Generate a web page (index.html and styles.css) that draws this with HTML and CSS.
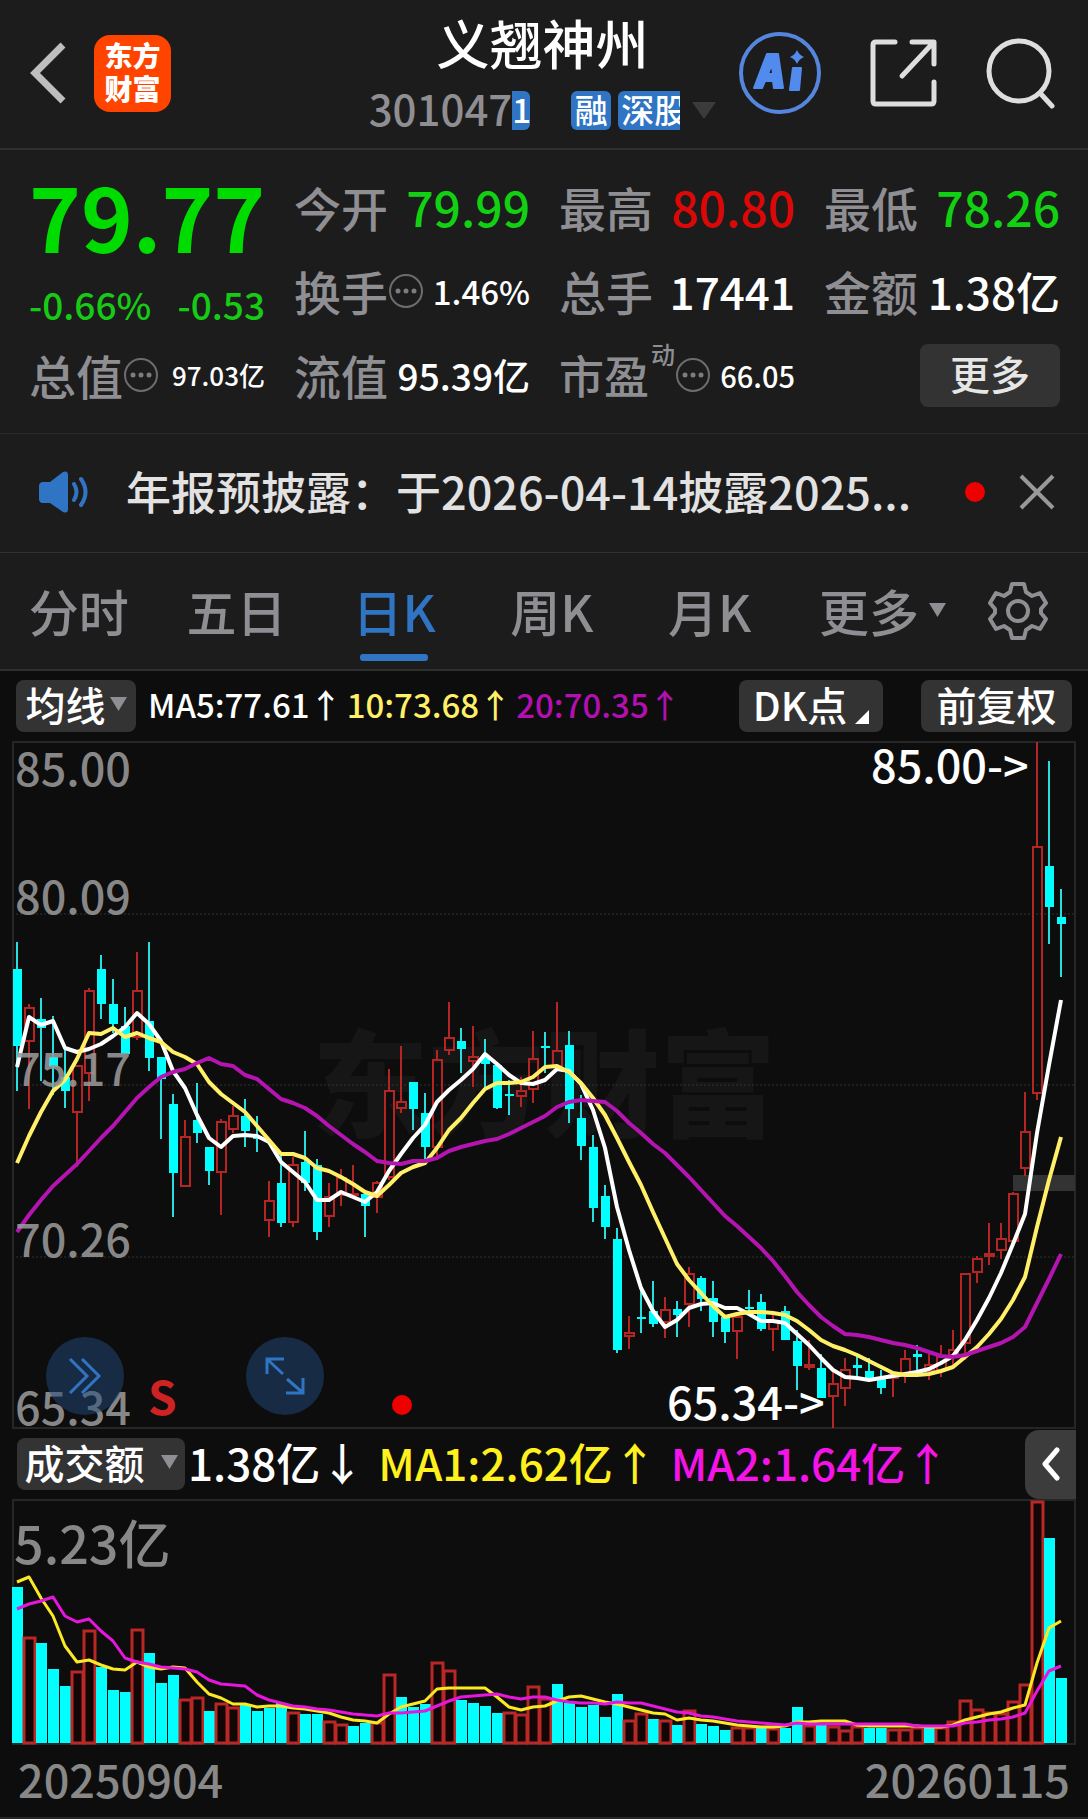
FILE: index.html
```html
<!DOCTYPE html>
<html lang="zh-CN">
<head>
<meta charset="utf-8">
<meta name="viewport" content="width=device-width, initial-scale=1">
<title>义翘神州 301047</title>
<link rel="stylesheet" href="styles.css">
</head>
<body>
<header class="topbar">
  <div class="topbar-left">
    <button class="icon-btn" aria-label="返回">
      <svg width="38" height="64" viewBox="0 0 38 64"><path d="M34 4 6 32l28 28" fill="none" stroke="#bebebe" stroke-width="7"/></svg>
    </button>
    <a class="logo" href="#">东方<br>财富</a>
  </div>
  <div class="title">
    <h1 class="name">义翘神州</h1>
    <div class="code-row">
      <span class="code">301047</span><span class="tag tag-cut">1</span>
      <span class="tag tag-margin">融</span>
      <span class="tag tag-market">深股</span>
      <svg class="code-caret" width="24" height="17" viewBox="0 0 24 17"><path d="M0 0h24L12 17z" fill="#3b3b3b"/></svg>
    </div>
  </div>
  <div class="topbar-right">
    <button class="icon-btn" aria-label="AI">
      <svg width="84" height="84" viewBox="0 0 84 84"><circle cx="42" cy="42" r="39" fill="none" stroke="#5585dc" stroke-width="4"/><path fill-rule="evenodd" fill="#528bee" stroke="#528bee" stroke-width="2" stroke-linejoin="round" d="M29 23h11l5 34h-9l-1-7h-8l-3 7h-8zM34 33l-4 10h5z"/><path fill="#528bee" stroke="#528bee" stroke-width="2" stroke-linejoin="round" d="m55 37h8l-2 22h-9z"/><path fill="#528bee" d="M59 19q2 5 7 7-5 2-7 7-2-5-7-7 5-2 7-7z"/></svg>
    </button>
    <button class="icon-btn" aria-label="分享">
      <svg width="68" height="70" viewBox="0 0 68 70"><g fill="none" stroke="#dedede" stroke-width="5" stroke-linecap="round" stroke-linejoin="round"><path d="M25 4H6q-3 0-3 3v56q0 3 3 3h55q3 0 3-3V44M42 4h22v22M63 5 32 38"/></g></svg>
    </button>
    <button class="icon-btn" aria-label="搜索">
      <svg width="70" height="72" viewBox="0 0 70 72"><g fill="none" stroke="#dedede" stroke-width="5" stroke-linecap="round"><circle cx="33" cy="34" r="30"/><path d="m54 56 12 13"/></g></svg>
    </button>
  </div>
</header>

<section class="quote">
  <div class="price-box">
    <div class="price">79.77</div>
    <div class="change"><span>-0.66%</span><span>-0.53</span></div>
  </div>
  <div class="stat"><span class="label">今开</span><span class="v48 down">79.99</span></div>
  <div class="stat"><span class="label">最高</span><span class="v48 up">80.80</span></div>
  <div class="stat"><span class="label">最低</span><span class="v48 down">78.26</span></div>
  <div class="stat"><span class="label">换手</span><svg class="info" viewBox="0 0 36 36"><use href="#info"/></svg><span class="v33">1.46%</span></div>
  <div class="stat"><span class="label">总手</span><span class="v44">17441</span></div>
  <div class="stat"><span class="label">金额</span><span class="v44">1.38亿</span></div>
  <div class="stat"><span class="label">总值</span><svg class="info" viewBox="0 0 36 36"><use href="#info"/></svg><span class="v26">97.03亿</span></div>
  <div class="stat"><span class="label">流值</span><span class="v37">95.39亿</span></div>
  <div class="stat"><span class="label label-pe">市盈</span><span class="pe-kind">动</span><svg class="info" viewBox="0 0 36 36"><use href="#info"/></svg><span class="v29">66.05</span></div>
  <div class="stat"><button class="more">更多</button></div>
  <svg class="defs" width="0" height="0"><defs><g id="info"><circle cx="18" cy="18" r="16" fill="none" stroke="#6d6d6f" stroke-width="2"/><g fill="#7c7c80"><circle cx="10" cy="18" r="2.5"/><circle cx="18" cy="18" r="2.5"/><circle cx="26" cy="18" r="2.5"/></g></g></defs></svg>
</section>

<section class="notice">
  <svg class="speaker" width="52" height="44" viewBox="0 0 52 44"><path fill="#3074c4" d="M4 12h8L25 2q5-2 5 3v34q0 5-5 3L12 33H4q-3-1-3-4V16q0-3 3-4z"/><g fill="none" stroke="#3074c4" stroke-width="4" stroke-linecap="round"><path d="M36 14q5 8 0 16M43 9q9 13 0 26"/></g></svg>
  <a class="notice-text" href="#">年报预披露：于2026-04-14披露2025...</a>
  <span class="dot"></span>
  <button class="icon-btn" aria-label="关闭"><svg width="36" height="36" viewBox="0 0 36 36"><path d="m2 2 32 32M34 2 2 34" stroke="#999" stroke-width="4"/></svg></button>
</section>

<nav class="tabs">
  <button class="tab">分时</button>
  <button class="tab">五日</button>
  <button class="tab active">日K</button>
  <button class="tab">周K</button>
  <button class="tab">月K</button>
  <button class="tab tab-more">更多<svg width="17" height="14" viewBox="0 0 17 14"><path d="M0 0h17L8.500 14z" fill="#8e8e93"/></svg></button>
  <button class="icon-btn settings" aria-label="设置"><svg width="60" height="60" viewBox="0 0 60 60"><g fill="none" stroke="#8e8e93" stroke-width="4" stroke-linejoin="round"><path d="M24 3h12l2 8 6 4 8-3 6 10-5 6v4l5 6-6 10-8-3-6 4-2 8H24l-2-8-6-4-8 3-6-10 5-6v-4l-5-6 6-10 8 3 6-4z"/><circle cx="30" cy="30" r="10"/></g></svg></button>
</nav>

<main class="charts">
  <div class="ma-bar">
    <button class="chip">均线<svg width="17" height="14" viewBox="0 0 17 14"><path d="M0 0h17L8.500 14z" fill="#8e8e93"/></svg></button>
    <span class="ma-values"><span>MA5:77.61<i class="arrow">↑</i></span><span class="ma10">10:73.68<i class="arrow">↑</i></span><span class="ma20">20:70.35<i class="arrow">↑</i></span></span>
    <button class="chip chip-dk">DK点<svg width="14" height="14" viewBox="0 0 14 14"><path d="M14 0v14H0z" fill="#fff"/></svg></button>
    <button class="chip chip-adjust">前复权</button>
  </div>

  <div class="kline">
    <svg class="plot" viewBox="12 741 1064 688" role="img" aria-label="日K线图">
      <text class="watermark" x="544" y="1128" text-anchor="middle">东方财富</text>
      <g class="grid"><path d="M12 914H1075M12 1085H1075M12 1257H1075"/></g>
      <path class="frame" d="M13 742H1075V1428H13z"/>
      <rect x="1013" y="1175" width="62" height="16" fill="#333"/>
      <g id="candles"></g>
      <g id="averages"></g>
      <g class="axis"><text x="15" y="786">85.00</text><text x="15" y="914">80.09</text><text x="15" y="1086">75.17</text><text x="15" y="1257">70.26</text><text x="15" y="1425">65.34</text></g>
      <g class="mark"><text x="871" y="783">85.00-&gt;</text><text x="667" y="1420">65.34-&gt;</text></g>
      <text class="sell" x="148" y="1415">S</text>
      <circle cx="402" cy="1405" r="10" fill="#e00"/>
    </svg>
    <div class="floating">
      <button class="round" aria-label="快进"><svg width="34" height="38" viewBox="0 0 34 38"><path d="m2 2 17 17L2 36M14 2l17 17-17 17" fill="none" stroke="#3074c4" stroke-width="3"/></svg></button>
      <button class="round" aria-label="全屏"><svg width="40" height="40" viewBox="0 0 40 40"><path d="M2 18V3h17M3 4l15 14M38 22v15H21M37 36 22 23" fill="none" stroke="#3074c4" stroke-width="3"/></svg></button>
    </div>
  </div>

  <div class="vol-bar">
    <button class="chip chip-vol">成交额<svg width="17" height="14" viewBox="0 0 17 14"><path d="M0 0h17L8.500 14z" fill="#8e8e93"/></svg></button>
    <span class="vol-values"><span>1.38亿<i class="arrow">↓</i></span><span class="vma1">MA1:2.62亿<i class="arrow">↑</i></span><span class="vma2">MA2:1.64亿<i class="arrow">↑</i></span></span>
    <button class="collapse" aria-label="展开"><svg width="20" height="34" viewBox="0 0 20 34"><path d="M16 3 4 17l12 14" fill="none" stroke="#fff" stroke-width="5" stroke-linecap="round" stroke-linejoin="round"/></svg></button>
  </div>

  <svg class="plot" viewBox="12 1499 1064 246" role="img" aria-label="成交额">
    <path class="frame" d="M13 1500H1075V1744H13z"/>
    <text class="vol-max" x="14" y="1564">5.23亿</text>
    <g id="bars"></g>
    <g id="vol-averages"></g>
  </svg>

  <footer class="dates"><time datetime="2025-09-04">20250904</time><time datetime="2026-01-15">20260115</time></footer>
</main>
<script src="chart.js"></script>
</body>
</html>
```
FILE: styles.css
```css
* { box-sizing: border-box; }
body {
  margin: 0;
  background: #0d0d0d;
  color: #fff;
  font-family: "Noto Sans CJK SC", "Noto Sans", sans-serif;
  font-weight: 500;
  line-height: 1;
}
button {
  border: 0;
  padding: 0;
  background: none;
  color: inherit;
  font: inherit;
}
svg { display: block; flex: none; }
.icon-btn { display: flex; flex: none; }
.defs { position: absolute; }

.topbar {
  display: grid;
  grid-template-columns: 1fr 350px 1fr;
  align-items: center;
  height: 150px;
  padding: 0 32px 2px 29px;
  background: #1c1c1c;
  border-bottom: 2px solid #303030;
}
.topbar-left { display: flex; align-items: center; gap: 27px; }
.logo {
  width: 77px;
  height: 77px;
  padding-top: 4px;
  border-radius: 16px;
  background: #ff4400;
  color: #fff;
  font-size: 28px;
  font-weight: 900;
  line-height: 33px;
  text-align: center;
  text-decoration: none;
}
.title { display: flex; flex-direction: column; align-items: center; gap: 18px; padding-bottom: 4px; }
.name { margin: 0; font-size: 53px; font-weight: 500; line-height: 60px; }
.code-row { display: flex; align-items: center; height: 40px; }
.code { padding-bottom: 4px; color: #8e8e93; font-size: 42px; }
.tag {
  height: 39px;
  overflow: hidden;
  border-radius: 6px;
  background: #3074c4;
  font-size: 33px;
  line-height: 36px;
  text-align: center;
  white-space: nowrap;
}
.tag-cut { width: 18px; border-radius: 0 6px 6px 0; text-align: left; }
.tag-margin { width: 40px; margin-left: 41px; }
.tag-market { width: 62px; margin-left: 7px; padding-left: 3px; border-radius: 6px 0 0 6px; text-align: left; }
.code-caret { margin-left: 12px; }
.topbar-right { display: flex; align-items: center; justify-content: flex-end; gap: 48px; }

.quote {
  display: grid;
  grid-template-columns: repeat(4, minmax(0, 1fr));
  grid-auto-rows: 84px;
  column-gap: 29px;
  padding: 15px 28px 16px 29px;
  background: #1c1c1c;
  border-bottom: 1px solid #2a2a2a;
}
.price-box { grid-row: span 2; display: flex; flex-direction: column; gap: 15px; }
.price { color: #00dc00; font-size: 88px; font-weight: 700; line-height: 100px; }
.change { display: flex; justify-content: space-between; color: #16ca16; font-size: 37px; line-height: 48px; }
.stat { display: flex; align-items: center; justify-content: space-between; white-space: nowrap; }
.label { padding-bottom: 2px; color: #8e8e93; font-size: 47px; }
.label-pe { font-size: 45px; }
.pe-kind { align-self: flex-start; margin: 9px 0 0 2px; color: #8e8e93; font-size: 24px; }
.info { width: 36px; height: 36px; margin-right: auto; }
.down { color: #12d012; }
.up { color: #dc0808; }
.v48 { padding-bottom: 3px; font-size: 48px; }
.v44 { font-size: 44px; }
.v37 { font-size: 37px; }
.v33 { font-size: 33px; }
.v29 { font-size: 29px; }
.v26 { font-size: 26px; }
.more {
  width: 140px;
  height: 63px;
  margin-left: auto;
  padding-bottom: 4px;
  border-radius: 8px;
  background: #333;
  color: #e6e6e6;
  font-size: 40px;
}

.notice {
  display: flex;
  align-items: center;
  height: 119px;
  padding: 0 33px 2px 38px;
  background: #1c1c1c;
  border-bottom: 1px solid #303030;
}
.notice-text {
  flex: 1;
  margin-left: 36px;
  padding-bottom: 3px;
  overflow: hidden;
  color: #e2e2e2;
  font-size: 45px;
  line-height: 64px;
  text-decoration: none;
  white-space: nowrap;
}
.dot { width: 20px; height: 20px; margin: 0 34px; border-radius: 50%; background: #e00; }

.tabs {
  display: flex;
  align-items: center;
  height: 118px;
  padding-right: 40px;
  background: #1c1c1c;
  border-bottom: 2px solid #303030;
}
.tab { position: relative; flex: 1; padding-bottom: 2px; color: #8e8e93; font-size: 50px; line-height: 64px; white-space: nowrap; }
.tab.active { color: #3074c4; }
.tab.active::after {
  content: "";
  position: absolute;
  bottom: -17px;
  left: 50%;
  width: 68px;
  height: 7px;
  margin-left: -34px;
  border-radius: 3px;
  background: #3074c4;
}
.tab-more { display: flex; align-items: center; justify-content: flex-end; gap: 10px; padding-right: 8px; }
.settings { margin-left: 34px; }

.charts { padding: 0 12px; border-bottom: 2px solid #262626; }
.ma-bar { display: flex; align-items: center; height: 70px; padding: 0 4px; }
.chip {
  display: flex;
  flex: none;
  align-items: center;
  justify-content: center;
  gap: 4px;
  width: 120px;
  height: 52px;
  padding-bottom: 4px;
  border-radius: 8px;
  background: #333;
  font-size: 40px;
  white-space: nowrap;
}
.arrow { display: inline-flex; justify-content: center; font-style: normal; }
.ma-values { display: flex; gap: 5px; margin: 0 auto 0 12px; padding-bottom: 3px; font-size: 33px; white-space: nowrap; }
.ma-values .arrow { width: 32px; }
.ma10 { color: #fff068; }
.ma20 { color: #b40fb0; }
.chip-dk { width: 144px; gap: 8px; }
.chip-dk svg { align-self: flex-end; margin-bottom: 4px; }
.chip-adjust { width: 151px; margin-left: 38px; }

.plot { width: 100%; height: auto; }
.kline { position: relative; }
.watermark { fill: #161616; font-size: 116px; font-weight: 900; }
.grid path { stroke: #333; stroke-dasharray: 2 2; }
.frame { fill: none; stroke: #262626; stroke-width: 2; }
.axis { fill: #999; fill-opacity: .88; font-size: 45px; }
.mark { fill: #fff; font-size: 45px; }
.sell { fill: #cf2222; font-size: 46px; font-weight: 700; }
.vol-max { fill: #888; font-size: 52px; }
.floating { position: absolute; bottom: 14px; left: 34px; display: flex; gap: 122px; }
.round {
  display: flex;
  align-items: center;
  justify-content: center;
  width: 78px;
  height: 78px;
  border-radius: 50%;
  background: rgba(34, 74, 124, .5);
}
.wick-up, .body-up { fill: none; stroke: #b42524; stroke-width: 2; }
.wick-down { stroke: #28dede; stroke-width: 2; }
.body-down { fill: #00ffff; }
.bar-up { fill: #120606; stroke: #b82827; stroke-width: 3; }
.line { fill: none; stroke-width: 4; stroke-linejoin: round; }
.line-5 { stroke: #fff; }
.line-10 { stroke: #fff068; }
.line-20 { stroke: #b414b0; }
.line-v1, .line-v2 { stroke-width: 3; }
.line-v1 { stroke: #fbe924; }
.line-v2 { stroke: #e616dc; }

.vol-bar { display: flex; align-items: center; height: 70px; padding-left: 5px; }
.chip-vol { width: 168px; gap: 16px; }
.vol-values { display: flex; gap: 14px; margin: 0 auto 0 3px; padding-bottom: 5px; font-size: 44px; white-space: nowrap; }
.vma1 { color: #fff01e; }
.vma2 { color: #f514e8; }
.collapse {
  display: flex;
  flex: none;
  align-items: center;
  justify-content: center;
  width: 51px;
  height: 69px;
  border-radius: 14px 0 0 14px;
  background: #3c3c3c;
}
.dates {
  display: flex;
  align-items: center;
  justify-content: space-between;
  height: 72px;
  padding: 0 6px 5px;
  color: #888;
  font-size: 45px;
}
```
FILE: chart.js
```js
// Each candle: direction, high, body top, body bottom, low (plot units).
const candles = `d942,969,1046,1091 u1004,1007,1042,1109 d998,1019,1028,1081 d1016,1057,1067,1095 d1048,1077,1091,1108
u1065,1065,1113,1167 u988,990,1074,1101 d955,969,1004,1019 d979,1004,1024,1033 d1007,1026,1054,1054
u952,990,1038,1040 d942,1021,1058,1071 d1057,1057,1079,1139 d1094,1104,1173,1217 u1120,1136,1187,1187
d1083,1120,1133,1143 d1147,1147,1171,1185 u1119,1121,1173,1215 u1106,1115,1130,1133 d1099,1116,1131,1147
d1116,1136,1139,1152 u1181,1200,1221,1237 d1155,1183,1223,1227 u1157,1164,1223,1227 d1131,1162,1183,1191
d1159,1165,1232,1240 u1183,1196,1217,1227 u1169,1177,1196,1206 u1165,1193,1195,1196 d1193,1194,1206,1237
u1181,1182,1198,1213 u1069,1090,1178,1180 u1046,1101,1109,1113 d1082,1082,1109,1130 d1093,1113,1147,1160
u1050,1059,1148,1156 u1002,1037,1051,1055 d1028,1041,1049,1073 u1026,1056,1062,1087 d1039,1057,1064,1088
d1063,1065,1108,1109 d1080,1094,1096,1115 u1077,1090,1097,1107 u1031,1058,1090,1103 d1032,1046,1048,1073
u1002,1050,1067,1068 d1031,1045,1109,1123 d1095,1118,1146,1160 d1135,1147,1208,1222 d1185,1196,1227,1239
d1228,1239,1350,1353 u1316,1332,1337,1349 d1288,1317,1319,1333 d1281,1311,1324,1327 u1297,1309,1323,1338
d1301,1309,1315,1337 u1267,1273,1305,1327 d1276,1278,1299,1311 d1281,1298,1322,1337 d1316,1317,1332,1343
u1315,1316,1332,1359 d1290,1307,1309,1312 d1294,1302,1329,1331 u1314,1320,1330,1351 d1306,1311,1340,1340
d1330,1341,1366,1390 u1340,1364,1368,1370 d1354,1368,1398,1398 u1370,1383,1397,1428 u1358,1369,1389,1406
d1356,1365,1368,1379 d1358,1371,1379,1381 d1370,1377,1388,1394 u1372,1374,1379,1397 u1350,1358,1376,1383
d1345,1354,1357,1370 u1354,1364,1372,1380 u1345,1356,1371,1377 u1330,1349,1356,1367 u1273,1273,1344,1360
u1256,1258,1273,1283 u1223,1253,1257,1265 u1223,1238,1251,1259 u1192,1193,1242,1242 u1092,1131,1169,1176
u742,846,1094,1100 d761,866,907,944 d889,917,924,977`.split(/\s+/);

const averages = {
  5: [1067,1017,1025,1021,1048,1052,1049,1044,1036,1027,1013,1024,1041,1071,1088,1115,1138,1147,1136,1135,1136,1142,1162,1172,1182,1200,1200,1192,1197,1202,1192,1171,1154,1138,1125,1102,1090,1080,1069,1054,1064,1075,1083,1084,1080,1069,1071,1084,1110,1148,1207,1250,1288,1311,1327,1320,1308,1304,1303,1308,1308,1314,1321,1321,1323,1334,1345,1358,1370,1377,1378,1380,1378,1376,1374,1372,1369,1363,1356,1340,1320,1298,1273,1244,1214,1133,1065,1000],
  10: [1163,1136,1112,1091,1080,1059,1033,1034,1028,1037,1033,1038,1042,1052,1057,1064,1082,1094,1103,1112,1126,1140,1154,1154,1158,1168,1171,1177,1184,1192,1196,1185,1173,1167,1163,1148,1130,1118,1103,1089,1083,1083,1082,1077,1067,1066,1072,1083,1098,1115,1138,1162,1185,1212,1238,1264,1280,1293,1306,1317,1314,1312,1312,1313,1315,1321,1330,1340,1346,1350,1355,1361,1367,1373,1375,1375,1374,1371,1367,1357,1347,1334,1319,1300,1277,1227,1180,1137],
  20: [1232,1215,1200,1186,1175,1164,1151,1138,1126,1112,1098,1087,1077,1072,1069,1063,1058,1064,1066,1075,1079,1089,1099,1103,1108,1116,1126,1135,1144,1152,1161,1163,1164,1161,1161,1158,1151,1147,1144,1141,1139,1134,1128,1122,1116,1107,1102,1100,1101,1102,1111,1123,1133,1144,1153,1165,1177,1190,1203,1216,1226,1237,1248,1261,1276,1292,1305,1317,1326,1334,1335,1337,1340,1343,1345,1348,1352,1356,1357,1355,1351,1347,1343,1337,1327,1303,1279,1254]
};

// Turnover bars: direction and bar top (plot units).
const bars = `d1587 u1637 d1643 d1669 d1686 u1671 u1630 d1667 d1690 d1692 u1629 d1653 d1683 d1675 u1699 u1697 d1711 u1703 u1707 d1705
d1711 d1708 d1703 u1712 d1714 d1714 u1721 u1724 d1726 d1723 u1722 u1674 d1697 d1707 d1704 u1662 u1670 d1700 d1703 d1706
d1713 u1712 u1714 u1686 u1698 d1684 d1703 d1707 d1705 d1717 d1694 u1720 u1713 d1719 u1720 d1725 u1710 d1724 d1726 d1730
u1727 u1727 d1728 u1728 d1728 d1707 u1725 d1725 u1726 u1730 u1726 d1728 d1728 u1729 u1729 u1727 d1728 u1727 u1721 u1700
u1709 u1712 u1713 u1701 u1684 u1501 d1538 d1678`.split(/\s+/);

const volAverages = {
  v1: [1582,1577,1598,1616,1646,1662,1660,1665,1669,1670,1662,1667,1669,1667,1668,1682,1694,1698,1704,1704,1707,1706,1706,1708,1709,1711,1713,1717,1720,1721,1723,1714,1707,1704,1701,1689,1688,1688,1688,1688,1697,1707,1710,1707,1706,1701,1697,1696,1699,1702,1704,1707,1710,1713,1714,1720,1718,1720,1721,1723,1725,1726,1727,1727,1726,1722,1722,1721,1721,1721,1725,1726,1726,1726,1726,1726,1727,1727,1725,1720,1717,1714,1712,1708,1705,1663,1628,1621],
  v2: [1609,1604,1601,1597,1616,1622,1619,1631,1641,1658,1662,1664,1667,1668,1669,1672,1680,1684,1685,1686,1695,1700,1703,1706,1707,1709,1710,1712,1714,1715,1716,1713,1713,1712,1711,1706,1701,1697,1696,1695,1694,1697,1699,1697,1697,1700,1702,1703,1703,1704,1702,1703,1703,1706,1709,1712,1713,1716,1717,1719,1721,1722,1723,1724,1725,1723,1724,1724,1724,1724,1724,1724,1724,1724,1724,1726,1726,1726,1726,1723,1722,1720,1719,1717,1713,1691,1671,1666]
};

const x = i => 17 + 12 * i;
const fill = (id, markup) => { document.getElementById(id).innerHTML = markup; };
const line = (key, ys) =>
  `<polyline class="line line-${key}" points="${ys.map((y, i) => x(i) + ',' + y).join(' ')}"/>`;

fill('candles', candles.map((item, i) => {
  const [high, top, bottom, low] = item.slice(1).split(',').map(Number);
  if (item[0] === 'd') {
    return `<path class="wick-down" d="M${x(i)} ${high}V${low}"/><rect class="body-down" x="${x(i) - 4}" y="${top}" width="9" height="${bottom - top}"/>`;
  }
  return `<path class="wick-up" d="M${x(i)} ${high}V${top}M${x(i)} ${bottom}V${low}"/><rect class="body-up" x="${x(i) - 4}" y="${top + 1}" width="9" height="${Math.max(bottom - top - 2, 1)}"/>`;
}).join(''));
fill('averages', line('5', averages[5]) + line('10', averages[10]) + line('20', averages[20]));

const base = 1743;
fill('bars', bars.map((item, i) => {
  const top = Number(item.slice(1));
  return item[0] === 'd'
    ? `<rect class="body-down" x="${x(i) - 5}" y="${top}" width="11" height="${base - top}"/>`
    : `<rect class="bar-up" x="${x(i) - 5}" y="${top + 1}" width="11" height="${base - top - 1}"/>`;
}).join(''));
fill('vol-averages', line('v1', volAverages.v1) + line('v2', volAverages.v2));
```
